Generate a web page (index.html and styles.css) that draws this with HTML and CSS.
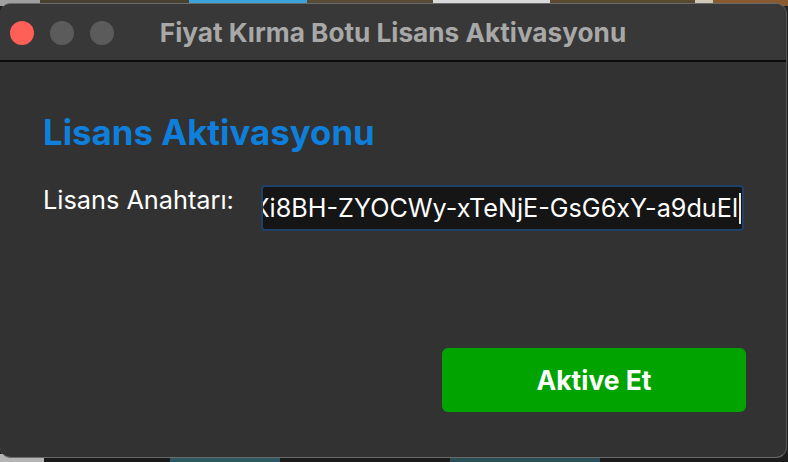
FILE: index.html
```html
<!DOCTYPE html>
<html lang="tr">
<head>
<meta charset="utf-8">
<title>Fiyat Kırma Botu Lisans Aktivasyonu</title>
<link rel="stylesheet" href="styles.css">
</head>
<body>
<div class="desktop">
  <div class="window">
    <div class="titlebar">
      <div class="lights">
        <span class="light red"></span>
        <span class="light gray"></span>
        <span class="light gray"></span>
      </div>
      <div class="title">Fiyat Kırma Botu Lisans Aktivasyonu</div>
    </div>
    <div class="content">
      <h1 class="heading">Lisans Aktivasyonu</h1>
      <div class="row">
        <label class="label">Lisans Anahtarı:</label>
        <div class="input"><span class="value">Xi8BH-ZYOCWy-xTeNjE-GsG6xY-a9duEl</span><span class="caret"></span></div>
      </div>
      <div class="actions">
        <button class="btn">Aktive Et</button>
      </div>
    </div>
  </div>
</div>
</body>
</html>
```
FILE: styles.css
```css
html, body {
  margin: 0;
  padding: 0;
}
body {
  width: 788px;
  height: 462px;
  overflow: hidden;
  font-family: Inter, "Noto Sans", "Liberation Sans", sans-serif;
}
.desktop {
  width: 788px;
  height: 462px;
  padding-top: 3px;
  box-sizing: border-box;
  background:
    linear-gradient(to right, #a0a0a0 0, #a0a0a0 40px, #4a4230 40px, #4a4230 189px, #3ba3da 189px, #3ba3da 307px, #5a4b36 307px, #5a4b36 433px, #d9d9d9 433px, #d9d9d9 550px, #5a4a30 550px, #5a4a30 695px, #d0c8b8 695px, #d0c8b8 713px, #8a5a30 713px) top / 100% 6px no-repeat,
    linear-gradient(to right, #b4b4b4 0, #b4b4b4 44px, #1a1a1a 44px, #1a1a1a 170px, #2d5a62 170px, #2d5a62 280px, #1c1c1c 280px, #1c1c1c 450px, #2b4f58 450px, #2b4f58 600px, #1c1c1c 600px) bottom / 100% 8px no-repeat,
    #222;
}
.window {
  width: 787px;
  height: 455px;
  border-radius: 11px;
  background: #323232;
  border-top: 1px solid #6a6a6a;
  border-right: 1px solid #555;
  border-bottom: 1px solid #6a6a6a;
  box-sizing: border-box;
  overflow: hidden;
  display: flex;
  flex-direction: column;
}
.titlebar {
  height: 56px;
  flex: none;
  background: #383838;
  border-bottom: 2px solid #0c0c0c;
  display: flex;
  align-items: center;
  position: relative;
}
.lights {
  display: flex;
  gap: 16px;
  padding-left: 10px;
  padding-top: 1px;
}
.light {
  width: 24px;
  height: 24px;
  border-radius: 50%;
  background: #5b5b5b;
}
.light.red {
  background: #fe5f57;
}
.title {
  position: absolute;
  left: 0;
  right: 0;
  top: 0;
  bottom: 0;
  display: flex;
  align-items: center;
  justify-content: center;
  color: #a8a8a8;
  font-weight: 700;
  font-size: 26.2px;
  padding-top: 1px;
}
.content {
  flex: 1;
  padding: 50px 40px 0 43px;
  display: flex;
  flex-direction: column;
}
.heading {
  margin: 0;
  color: #0f7fdc;
  font-size: 34.8px;
  font-weight: 700;
  line-height: 40px;
}
.row {
  display: flex;
  align-items: flex-start;
  margin-top: 33px;
}
.label {
  color: #ffffff;
  font-size: 25.3px;
  width: 218px;
  line-height: 30px;
}
.input {
  width: 483px;
  height: 46px;
  box-sizing: border-box;
  background: #151515;
  border: 2px solid #1f4068;
  border-radius: 4px;
  display: flex;
  justify-content: flex-end;
  align-items: center;
  overflow: hidden;
  white-space: nowrap;
  padding-right: 1px;
  color: #ffffff;
  font-size: 25.2px;
}
.value {
  flex: none;
}
.caret {
  flex: none;
  width: 2px;
  height: 31px;
  background: #e8e8e8;
  margin-left: 1px;
}
.actions {
  display: flex;
  justify-content: flex-end;
  margin-top: 117px;
}
.btn {
  width: 304px;
  height: 64px;
  border: none;
  border-radius: 6px;
  background: #00a300;
  color: #ffffff;
  font-family: inherit;
  font-size: 26.4px;
  font-weight: 700;
  padding: 0;
}
```
